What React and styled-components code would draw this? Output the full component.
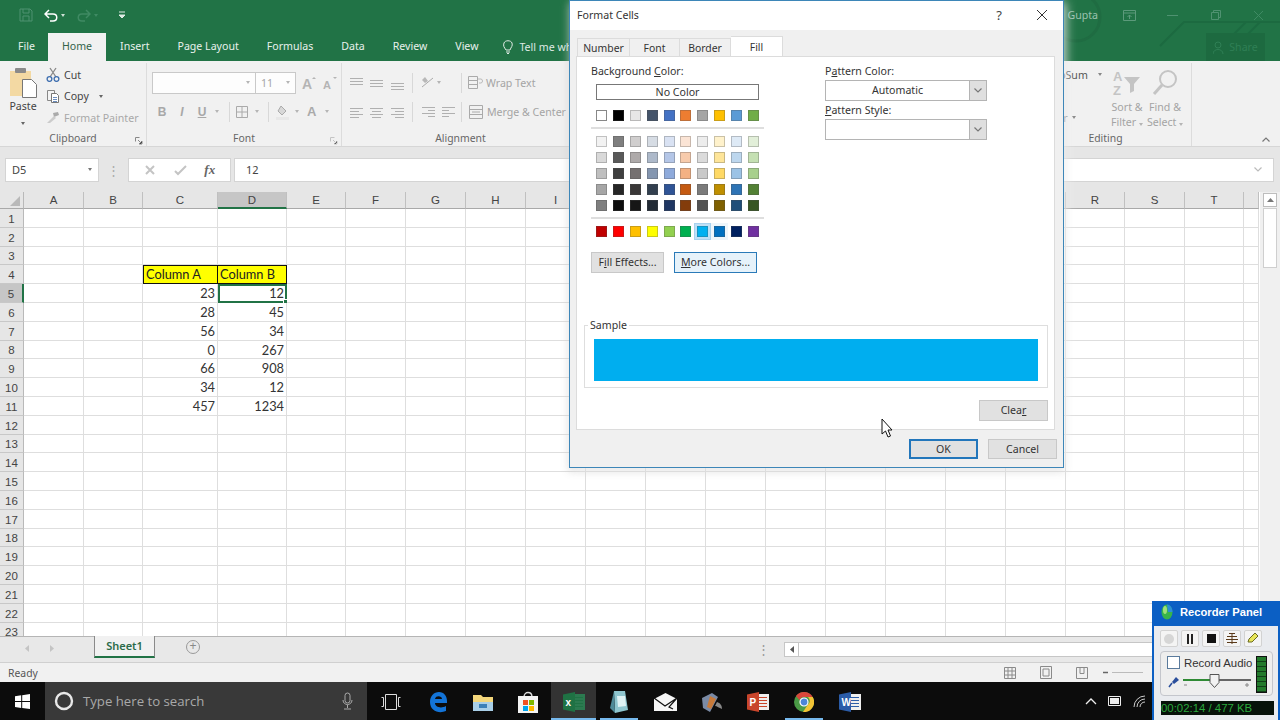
import React from 'react'
import styled, { createGlobalStyle } from 'styled-components'

const ui = '"Noto Sans", "Open Sans", sans-serif'

const GlobalStyle = createGlobalStyle`
  html, body { margin: 0; padding: 0; background: #fff; }
  * { box-sizing: border-box; }
`

const Page = styled.div`
  position: relative;
  display: flex;
  flex-direction: column;
  width: 1280px;
  height: 720px;
  overflow: hidden;
  font-family: ${ui};
  font-size: 11px;
  color: #333;
`

/* ---------- title bar ---------- */
const TitleBar = styled.div`
  position: relative;
  flex: none;
  height: 61px;
  background: #217346;
  overflow: hidden;
`
const Circuit = styled.svg`
  position: absolute;
  inset: 0;
`
const QatRow = styled.div`
  position: relative;
  display: flex;
  align-items: center;
  height: 30px;
  padding-left: 19px;
  gap: 9px;
`
const WindowControls = styled.div`
  margin-left: auto;
  display: flex;
  align-items: center;
  height: 30px;
  color: #9cc2ae;
  font-size: 10.6px;
`
const Gupta = styled.span`
  margin-right: 10px;
`
const WinBtn = styled.div`
  width: 43px;
  display: flex;
  justify-content: center;
`
const TabRow = styled.div`
  position: relative;
  display: flex;
  align-items: flex-end;
  height: 31px;
  padding-left: 5px;
`
const RibbonTab = styled.div`
  height: 28px;
  line-height: 27px;
  padding: 0 ${p => p.$pad || 13}px;
  margin-right: ${p => p.$mr || 0}px;
  font-size: 10.6px;
  white-space: nowrap;
  color: ${p => (p.$active ? '#33634a' : '#e8f1ec')};
  background: ${p => (p.$active ? '#f1f1f1' : 'transparent')};
`
const TellMe = styled.div`
  display: flex;
  align-items: center;
  gap: 6px;
  width: 66px;
  height: 28px;
  margin-left: 11px;
  overflow: hidden;
  white-space: nowrap;
  font-size: 10.6px;
  color: #dfeae4;
`
const Share = styled.div`
  position: absolute;
  right: 15px;
  bottom: 0;
  width: 59px;
  height: 28px;
  background: #1d6a40;
  color: #2f7f55;
  display: flex;
  align-items: center;
  justify-content: center;
  gap: 5px;
  font-size: 10.6px;
`

/* ---------- ribbon ---------- */
const Ribbon = styled.div`
  flex: none;
  display: flex;
  height: 86px;
  padding-top: 2px;
  background: #f1f1f1;
  border-bottom: 1px solid #d6d6d6;
  position: relative;
`
const Group = styled.div`
  position: relative;
  flex: none;
  width: ${p => p.$w}px;
  height: 83px;
  border-right: ${p => (p.$plain ? 'none' : '1px solid #dcdcdc')};
`
const GroupBody = styled.div`
  display: flex;
  height: 68px;
  padding-left: ${p => p.$pl || 0}px;
`
const GroupLabel = styled.div`
  height: 14px;
  line-height: 14px;
  text-align: center;
  color: #666;
  font-size: 10.4px;
`
const Launcher = styled.svg`
  position: absolute;
  right: 3px;
  bottom: 1px;
`
const PasteCol = styled.div`
  width: 46px;
  display: flex;
  flex-direction: column;
  align-items: center;
  font-size: 10.6px;
  color: #444;
  padding-top: 5px;
`
const Stack = styled.div`
  display: flex;
  flex-direction: column;
  gap: ${p => p.$gap || 0}px;
  padding-top: ${p => p.$pt || 0}px;
  width: ${p => (p.$w ? `${p.$w}px` : 'auto')};
`
const SmallBtn = styled.div`
  display: flex;
  align-items: center;
  gap: ${p => p.$gap || 4}px;
  height: 21.5px;
  white-space: nowrap;
  font-size: 10.6px;
  color: ${p => p.$c || '#444'};
`
const Caret = styled.span`
  display: inline-block;
  flex: none;
  width: 0;
  height: 0;
  margin-left: ${p => p.$ml || 0}px;
  margin-top: ${p => p.$mt || 0}px;
  border-left: 2.5px solid transparent;
  border-right: 2.5px solid transparent;
  border-top: 3px solid ${p => p.$c || '#b5b5b5'};
`
const ComboRow = styled.div`
  display: flex;
  align-items: center;
  height: 23px;
`
const RibbonCombo = styled.div`
  width: ${p => p.$w}px;
  height: 22px;
  background: #fdfdfd;
  border: 1px solid #c9c9c9;
  margin-left: ${p => (p.$join ? -1 : 0)}px;
  display: flex;
  align-items: center;
  padding: 0 5px;
  color: #a6a6a6;
  font-size: 10.6px;
  & > span:last-child {
    margin-left: auto;
  }
`
const IconSlot = styled.div`
  width: ${p => p.$w}px;
  flex: none;
  display: flex;
  align-items: center;
  justify-content: center;
  height: 22px;
  margin-left: ${p => p.$ml || 0}px;
  color: #a8a8a8;
  font-weight: ${p => (p.$bold ? 700 : 400)};
  font-style: ${p => (p.$italic ? 'italic' : 'normal')};
  text-decoration: ${p => (p.$under ? 'underline' : 'none')};
  font-size: 12px;
  font-family: "Liberation Sans", sans-serif;
`
const VSep = styled.div`
  flex: none;
  width: 1px;
  height: 20px;
  margin-left: ${p => p.$ml}px;
  margin-right: ${p => p.$mr}px;
  background: #d8d8d8;
`
const BigBtn = styled.div`
  width: ${p => p.$w}px;
  display: flex;
  flex-direction: column;
  align-items: center;
  color: #a4a4a4;
  font-size: 10.6px;
  line-height: 15px;
  padding-top: 6px;
  white-space: nowrap;
`
const BigIcon = styled.div`
  height: 31px;
`

/* ---------- formula bar ---------- */
const FormulaBar = styled.div`
  flex: none;
  display: flex;
  align-items: center;
  height: 45px;
  padding: 0 6px 0 5px;
  background: #e6e6e6;
`
const FieldBox = styled.div`
  height: 24px;
  background: #fff;
  border: 1px solid #d4d4d4;
  display: flex;
  align-items: center;
  font-size: 11px;
  color: #444;
`
const NameBox = styled(FieldBox)`
  width: 94px;
  padding: 0 6px;
  justify-content: space-between;
`
const Dots = styled.div`
  width: 29px;
  text-align: center;
  color: #aaa;
  font-size: 13px;
  line-height: 6px;
`
const FxBox = styled(FieldBox)`
  width: 103px;
  justify-content: space-around;
  padding: 0 6px;
  color: #bbb;
`
const Fx = styled.span`
  font-family: "Liberation Serif", serif;
  font-style: italic;
  font-weight: 700;
  color: #666;
  font-size: 13px;
`
const FormulaInput = styled(FieldBox)`
  flex: 1;
  margin-left: 3px;
  padding: 0 11px;
  justify-content: space-between;
`

/* ---------- sheet ---------- */
const SheetArea = styled.div`
  flex: none;
  display: flex;
  height: 444px;
  background: #e6e6e6;
`
const SheetGrid = styled.div`
  flex: none;
  width: 1260px;
  height: 444px;
  overflow: hidden;
  display: grid;
  grid-template-columns: 24px 60px 59px 75px 69px 59px repeat(12, 60px) 59px 60px 59px 15px;
  grid-template-rows: 17px repeat(23, 18.8px);
  background: #fff;
  font-family: Lato, "Liberation Sans", sans-serif;
  font-size: 12.8px;
  color: #333;
`
const Corner = styled.div`
  background: #e6e6e6;
  border-right: 1px solid #b9b9b9;
  border-bottom: 1px solid #a9a9a9;
  display: flex;
  align-items: flex-end;
  justify-content: flex-end;
  padding: 0 3px 2px 0;
`
const ColHead = styled.div`
  display: flex;
  align-items: center;
  justify-content: center;
  font-family: "Liberation Sans", sans-serif;
  font-size: 11.5px;
  color: #444;
  background: ${p => (p.$sel ? '#c6c6c6' : '#e6e6e6')};
  border-right: 1px solid #c0c0c0;
  border-bottom: ${p => (p.$sel ? '2px solid #217346' : '1px solid #a9a9a9')};
`
const RowHead = styled.div`
  display: flex;
  align-items: center;
  justify-content: center;
  padding-top: 2px;
  font-family: "Liberation Sans", sans-serif;
  font-size: 11.5px;
  color: #444;
  background: ${p => (p.$sel ? '#c6c6c6' : '#e6e6e6')};
  border-right: ${p => (p.$sel ? '2px solid #217346' : '1px solid #b9b9b9')};
  border-bottom: 1px solid #c8c8c8;
`
const Cell = styled.div`
  position: relative;
  display: flex;
  align-items: flex-end;
  justify-content: ${p => (p.$head ? 'flex-start' : 'flex-end')};
  padding: 0 2px 2px;
  line-height: 1;
  white-space: nowrap;
  background: ${p => (p.$head ? '#ffff00' : '#fff')};
  color: ${p => (p.$head ? '#222' : '#333')};
  border-right: 1px solid ${p => (p.$head ? '#111' : '#dedede')};
  border-bottom: 1px solid ${p => (p.$head ? '#111' : '#dedede')};
  ${p => p.$head && 'border-top: 1px solid #111;'}
  ${p => p.$first && 'border-left: 1px solid #111;'}
  ${p => p.$sel && 'outline: 2px solid #217346; outline-offset: -2px;'}
`
const FillHandle = styled.div`
  position: absolute;
  right: -3px;
  bottom: -3px;
  width: 6px;
  height: 6px;
  background: #217346;
  border: 1px solid #fff;
`
const VScroll = styled.div`
  flex: none;
  width: 20px;
  padding: 1px 3px 0;
  background: #f0f0f0;
`
const ScrollUp = styled.div`
  height: 14px;
  background: #fff;
  border: 1px solid #bdbdbd;
  display: flex;
  align-items: center;
  justify-content: center;
`
const ScrollThumb = styled.div`
  height: 60px;
  margin-top: 1px;
  background: #fff;
  border: 1px solid #cfcfcf;
`

/* ---------- sheet tab bar / status ---------- */
const TabBar = styled.div`
  flex: none;
  display: flex;
  align-items: flex-start;
  height: 26px;
  background: #e8e8e8;
  border-top: 1px solid #b5b5b5;
`
const NavArrows = styled.div`
  width: 94px;
  height: 22px;
  display: flex;
  align-items: center;
  gap: 21px;
  padding-left: 25px;
`
const SheetTab = styled.div`
  width: 61px;
  height: 22px;
  background: #f1f1f1;
  border-left: 1px solid #8a8a8a;
  border-right: 1px solid #8a8a8a;
  border-bottom: 2px solid #217346;
  margin-top: -1px;
  text-align: center;
  line-height: 20px;
  font-size: 11px;
  font-weight: 600;
  color: #2b6b4a;
`
const AddSheet = styled.div`
  width: 14px;
  height: 14px;
  margin: 3px 0 0 31px;
  border: 1px solid #999;
  border-radius: 50%;
  color: #888;
  font-size: 12px;
  line-height: 11px;
  text-align: center;
  font-family: "Liberation Sans", sans-serif;
`
const HScrollDots = styled.div`
  margin-left: auto;
  margin-right: 14px;
  margin-top: 10px;
  color: #999;
  font-size: 13px;
  line-height: 5px;
`
const HScroll = styled.div`
  display: flex;
  width: 480px;
  height: 15px;
  margin: 5px 16px 0 0;
  background: #fff;
  border: 1px solid #c6c6c6;
`
const HScrollBtn = styled.div`
  width: 14px;
  height: 13px;
  border-right: 1px solid #c6c6c6;
  display: flex;
  align-items: center;
  justify-content: center;
`
const StatusBar = styled.div`
  flex: none;
  display: flex;
  align-items: center;
  height: 20px;
  padding-left: 8px;
  background: #f1f1f1;
  border-top: 1px solid #d0d0d0;
  color: #555;
  font-size: 10.4px;
`
const ViewIcons = styled.div`
  margin-left: auto;
  margin-right: 173px;
  display: flex;
  align-items: center;
  gap: 24px;
`
const ZoomOut = styled.svg`
  margin-left: -9px;
  margin-right: -36px;
`

/* ---------- taskbar ---------- */
const Taskbar = styled.div`
  flex: none;
  display: flex;
  align-items: stretch;
  height: 38px;
  background: #0c0c0c;
`
const StartBtn = styled.div`
  width: 45px;
  display: flex;
  align-items: center;
  justify-content: center;
`
const SearchBox = styled.div`
  width: 322px;
  background: #393939;
  display: flex;
  align-items: center;
  padding: 0 14px 0 9px;
  gap: 9px;
  color: #a9a9a9;
  font-size: 13.2px;
  font-family: "Open Sans", sans-serif;
  & > svg:last-child {
    margin-left: auto;
  }
`
const TaskItem = styled.div`
  position: relative;
  flex: none;
  width: ${p => p.$w || 45}px;
  display: flex;
  align-items: center;
  justify-content: center;
  background: ${p => (p.$active ? '#333' : 'transparent')};
  padding-top: 2px;
  ${p =>
    p.$open &&
    `&::after {
      content: '';
      position: absolute;
      bottom: 0;
      left: ${p.$active ? 0 : 4}px;
      right: ${p.$active ? 0 : 4}px;
      height: 2px;
      background: #76b9ed;
    }`}
`
const Tray = styled.div`
  margin-left: 212px;
  display: flex;
  align-items: center;
  gap: 11px;
`

/* ---------- format cells dialog ---------- */
const Dialog = styled.div`
  position: absolute;
  left: 569px;
  top: 0;
  width: 495px;
  height: 468px;
  display: flex;
  flex-direction: column;
  background: #f0f0f0;
  border: 1px solid #3d86b8;
  box-shadow: 2px 2px 10px rgba(255, 255, 255, 0.75), 0 3px 8px rgba(90, 90, 90, 0.25);
  font-size: 10.6px;
  color: #333;
`
const DialogTitle = styled.div`
  flex: none;
  height: 29px;
  background: #fff;
  display: flex;
  align-items: center;
  padding: 0 15px 2px 7px;
  font-size: 10.6px;
  color: #333;
`
const HelpMark = styled.span`
  margin-left: auto;
  margin-right: 34px;
  font-size: 13px;
  color: #444;
`
const DialogTabs = styled.div`
  flex: none;
  height: 26px;
  display: flex;
  align-items: flex-end;
  padding-left: 7px;
`
const DialogTab = styled.div`
  width: ${p => p.$w}px;
  height: ${p => (p.$active ? 20 : 18)}px;
  line-height: ${p => (p.$active ? 20 : 19)}px;
  text-align: center;
  background: ${p => (p.$active ? '#fff' : '#f0f0f0')};
  border: 1px solid #dcdcdc;
  border-width: 1px 1px 0 ${p => (p.$first ? 1 : 0)}px;
  font-size: 10.4px;
`
const Panel = styled.div`
  flex: none;
  width: 479px;
  height: 374px;
  margin-left: 6px;
  background: #fff;
  border: 1px solid #dcdcdc;
  padding: 7px 6px 0 7px;
`
const TopColumns = styled.div`
  display: flex;
  height: 209px;
  padding-left: 7px;
`
const LeftCol = styled.div`
  width: 234px;
`
const Label = styled.div`
  height: 14px;
  line-height: 14px;
  white-space: nowrap;
`
const NoColor = styled.div`
  width: 163px;
  height: 16px;
  margin: 6px 0 10px 5px;
  border: 1px solid #777;
  text-align: center;
  line-height: 14px;
`
const SwatchRow = styled.div`
  display: flex;
  justify-content: space-between;
  width: 163px;
  margin-left: 5px;
  margin-bottom: ${p => p.$mb || 0}px;
`
const Swatch = styled.div`
  width: 11px;
  height: 11px;
  background: ${p => p.$c};
  border: 1px solid ${p => (p.$c === '#ffffff' ? '#888' : 'rgba(80, 80, 80, 0.3)')};
  box-shadow: ${p =>
    p.$sel
      ? '0 0 0 2px #bfe0f5, 0 0 0 3px #a8d2ee'
      : p.$near
      ? '0 0 0 3px #eef6fb'
      : 'none'};
`
const PaletteLine = styled.div`
  width: 173px;
  height: 2px;
  background: #dedede;
  margin: 6px 0 7px;
`
const ButtonRow = styled.div`
  display: flex;
  gap: 10px;
  margin-top: 15px;
`
const DlgButton = styled.div`
  width: ${p => p.$w}px;
  height: ${p => p.$h || 21}px;
  line-height: ${p => (p.$h || 21) - 2}px;
  text-align: center;
  background: ${p => (p.$focus ? '#e6f2fa' : '#e1e1e1')};
  border: 1px solid ${p => (p.$focus ? '#2a7ab8' : '#c8c8c8')};
  ${p => p.$default && 'border: 2px solid #2276bb; line-height: 16px;'}
`
const RightCol = styled.div`
  width: 162px;
`
const Combo = styled.div`
  display: flex;
  height: 21px;
  margin: 2px 0 2px;
  border: 1px solid #b4b4b4;
  background: #fff;
`
const ComboText = styled.div`
  flex: 1;
  text-align: center;
  line-height: 19px;
`
const ComboArrow = styled.div`
  width: 17px;
  background: #dfdfdf;
  border-left: 1px solid #b4b4b4;
  display: flex;
  align-items: center;
  justify-content: center;
`
const SampleGroup = styled.fieldset`
  margin: 45px 0 0;
  padding: 0 9px 6px;
  min-width: 0;
  width: 464px;
  border: 1px solid #dedede;
`
const SampleLegend = styled.legend`
  padding: 0 2px;
  margin-left: -6px;
  height: 14px;
  line-height: 14px;
`
const SampleFill = styled.div`
  height: 42px;
  margin-top: 7px;
  background: #00aeef;
`
const ClearRow = styled.div`
  display: flex;
  justify-content: flex-end;
  width: 464px;
  margin-top: 12px;
`
const DialogActions = styled.div`
  display: flex;
  justify-content: flex-end;
  gap: 10px;
  padding: 9px 6px 0 0;
`
const Cursor = styled.svg`
  position: absolute;
  left: 881px;
  top: 418px;
`

/* ---------- recorder panel ---------- */
const Recorder = styled.div`
  position: absolute;
  left: 1152px;
  top: 601px;
  width: 128px;
  height: 119px;
  background: #e9ebef;
  border-left: 2px solid #0b5fc4;
  border-right: 2px solid #0b5fc4;
  display: flex;
  flex-direction: column;
`
const RecTitle = styled.div`
  flex: none;
  height: 25px;
  display: flex;
  align-items: center;
  gap: 7px;
  padding: 0 0 3px 7px;
  background: #0b5fc4;
  color: #fff;
  font: 700 11.2px "Liberation Sans", sans-serif;
  white-space: nowrap;
`
const RecButtons = styled.div`
  display: flex;
  gap: 3px;
  margin: 4px 0 0 6px;
`
const RecButton = styled.div`
  width: 18px;
  height: 17px;
  background: #f4f4f4;
  border: 1px solid #d2d2d2;
  border-radius: 2px;
  display: flex;
  align-items: center;
  justify-content: center;
`
const RecAudio = styled.div`
  position: relative;
  width: 113px;
  height: 45px;
  margin: 4px 0 0 6px;
  background: #eeeeee;
  border: 1px solid #c4c6cc;
  border-radius: 4px;
  padding: 4px 0 0 6px;
`
const RecCheckRow = styled.div`
  display: flex;
  align-items: center;
  gap: 4px;
  font: 11.4px "Liberation Sans", sans-serif;
  color: #333;
  white-space: nowrap;
`
const RecCheck = styled.div`
  width: 13px;
  height: 13px;
  background: #fff;
  border: 1px solid #5a7a9c;
`
const RecSliderRow = styled.div`
  display: flex;
  align-items: center;
  gap: 3px;
  margin-top: 5px;
`
const Meter = styled.div`
  position: absolute;
  right: 5px;
  top: 4px;
  bottom: 2px;
  width: 11px;
  border: 1px solid #111;
  background: repeating-linear-gradient(#237a2c 0 4px, #123e18 4px 5px);
`
const RecTime = styled.div`
  width: 113px;
  height: 14px;
  margin: 5px 0 0 7px;
  background: #07120a;
  color: #2aa83c;
  font: 11.4px/14px "Liberation Sans", sans-serif;
  white-space: nowrap;
`

/* ---------- drawings ---------- */
const Svg = ({ w = 16, h = 16, children, ...rest }) => (
  <svg width={w} height={h} viewBox={`0 0 ${w} ${h}`} fill="none" {...rest}>
    {children}
  </svg>
)

const lines = (rows, color, sw = 1) =>
  rows.map(([x1, x2, y], i) => (
    <line key={i} x1={x1} x2={x2} y1={y + 0.5} y2={y + 0.5} stroke={color} strokeWidth={sw} />
  ))

const PasteIcon = () => (
  <Svg w={28} h={31}>
    <rect x="1" y="3" width="21" height="25" fill="#f3d9a3" />
    <rect x="6" y="0" width="11" height="5" rx="1" fill="#8a8a8a" />
    <path d="M13.500 11.500h9l5 5v13h-14z" fill="#fff" stroke="#777" />
  </Svg>
)
const ScissorsIcon = () => (
  <Svg w={14} h={15}>
    <path d="M4 1l6 9M10 1L4 10" stroke="#888" strokeWidth="1.3" />
    <circle cx="3.5" cy="12" r="2.4" stroke="#3f6fb0" strokeWidth="1.3" />
    <circle cx="10.5" cy="12" r="2.4" stroke="#3f6fb0" strokeWidth="1.3" />
  </Svg>
)
const CopyIcon = () => (
  <Svg w={14} h={14}>
    <path d="M1.5 1.5h7v10h-7z" stroke="#888" fill="#f4f4f4" />
    <path d="M5.5 4.5h5l2 2v7h-7z" stroke="#777" fill="#fff" />
    {lines([[7, 11, 8], [7, 11, 10], [7, 11, 12]], '#6c8ebf')}
  </Svg>
)
const PainterIcon = () => (
  <Svg w={14} h={13}>
    <path d="M7 2l5-1 1 3-5 2z" fill="#aaa" />
    <path d="M1 12l7-7 2 2-6 5z" fill="#ccc" />
  </Svg>
)
const GrowIcon = ({ small }) => (
  <Svg w={16} h={16}>
    <text x="1" y="14" fontSize={small ? 11 : 14} fontWeight="700" fill="#b4b4b4" fontFamily="Liberation Sans">A</text>
    <path d={small ? 'M11 2h4l-2 2z' : 'M11 4h4l-2-2z'} fill="#b4b4b4" />
  </Svg>
)
const BordersIcon = () => (
  <Svg w={14} h={14}>
    <path d="M1.5 1.5h11v11h-11zM7 1.5v11M1.5 7h11" stroke="#aaa" />
  </Svg>
)
const FillIcon = () => (
  <Svg w={14} h={16}>
    <path d="M5 2l5 5-4 4-4-4z" stroke="#aaa" fill="#d8d8d8" />
    <rect x="0" y="13" width="13" height="3" fill="#e8e8e8" />
  </Svg>
)
const FontColorIcon = () => (
  <Svg w={12} h={15}>
    <text x="0" y="12" fontSize="13" fontWeight="700" fill="#aaa" fontFamily="Liberation Sans">A</text>
  </Svg>
)
const AlignIcon = ({ rows }) => (
  <Svg w={15} h={14}>{lines(rows, '#b0b0b0')}</Svg>
)
const OrientIcon = () => (
  <Svg w={15} h={15}>
    <path d="M2 12L13 3" stroke="#aaa" />
    <path d="M2 5l3-3 3 4-3 2z" fill="#b8b8b8" />
  </Svg>
)
const WrapIcon = () => (
  <Svg w={17} h={15}>
    <path d="M1.5 1.5h9v12h-9zM1.5 5.5h9M1.5 9.5h9" stroke="#aaa" />
    <path d="M11 4h3c2 0 2 4 0 4h-2" stroke="#bbb" />
  </Svg>
)
const MergeIcon = () => (
  <Svg w={16} h={16}>
    <path d="M1.5 1.5h13v13h-13zM1.5 5.5h13M1.5 10.5h13" stroke="#aaa" />
    <path d="M4 8h8" stroke="#aaa" />
  </Svg>
)
const SortIcon = () => (
  <Svg w={30} h={28}>
    <text x="1" y="12" fontSize="13" fontWeight="700" fill="#c4c4c4" fontFamily="Liberation Sans">A</text>
    <text x="1" y="26" fontSize="13" fontWeight="700" fill="#c4c4c4" fontFamily="Liberation Sans">Z</text>
    <path d="M12 8h16l-6 7v7l-4 2v-9z" fill="#c4c4c4" />
  </Svg>
)
const FindIcon = () => (
  <Svg w={28} h={28}>
    <circle cx="17" cy="10" r="8" stroke="#c4c4c4" strokeWidth="2" />
    <path d="M11 16l-8 9" stroke="#c4c4c4" strokeWidth="3" />
  </Svg>
)
const Chevron = ({ up, color = '#777', size = 8 }) => (
  <Svg w={size} h={5}>
    <path d={up ? `M0.5 4.5L${size / 2} 1L${size - 0.5} 4.5` : `M0.5 0.5L${size / 2} 4L${size - 0.5} 0.5`} stroke={color} strokeWidth="1.2" />
  </Svg>
)
const WindowsLogo = () => (
  <Svg w={15} h={15}>
    <path d="M0 2.2l6.2-.9v5.8H0zM7.2 1.2L15 0v7.1H7.2zM0 8.1h6.2v5.8L0 13zM7.2 8.1H15V15l-7.8-1.1z" fill="#fff" />
  </Svg>
)
const EdgeIcon = () => (
  <Svg w={20} h={22}>
    <path d="M2 11C2 5 6 1 11 1c5 0 8 4 8 9v2H7c0 4 6 6 11 3v5c-7 3-16 0-16-9zm5-3h7c0-3-6-4-7 0z" fill="#1374d8" />
  </Svg>
)
const FolderIcon = () => (
  <Svg w={20} h={18}>
    <path d="M0 2h8l2 2h10v14H0z" fill="#f4d77b" />
    <rect x="0" y="9" width="20" height="9" fill="#a9cfe8" />
    <rect x="6" y="11" width="8" height="4" fill="#3c80b8" />
  </Svg>
)
const StoreIcon = () => (
  <Svg w={22} h={22}>
    <path d="M7 6c0-6 8-6 8 0" stroke="#ddd" strokeWidth="1.4" />
    <rect x="1" y="5" width="20" height="17" fill="#f4f4f4" />
    <rect x="6" y="9" width="5" height="5" fill="#f25022" />
    <rect x="12" y="9" width="5" height="5" fill="#7fba00" />
    <rect x="6" y="15" width="5" height="5" fill="#00a4ef" />
    <rect x="12" y="15" width="5" height="5" fill="#ffb900" />
  </Svg>
)
const DocIcon = ({ bg, letter, page = '#eee' }) => (
  <Svg w={22} h={20}>
    <rect x="8" y="2" width="14" height="16" fill={page} />
    {lines([[12, 20, 5], [12, 20, 8], [12, 20, 11], [12, 20, 14]], bg)}
    <path d="M0 2.5L12 0v20L0 17.5z" fill={bg} />
    <text x="2.5" y="14" fontSize="10" fontWeight="700" fill="#fff" fontFamily="Liberation Sans">{letter}</text>
  </Svg>
)
const ChromeIcon = () => (
  <Svg w={20} h={20}>
    <circle cx="10" cy="10" r="10" fill="#4a9b46" />
    <path d="M10 0a10 10 0 0 1 8.7 5H10a5 5 0 0 0-4.6 3L2 4a10 10 0 0 1 8-4z" fill="#d8473b" />
    <path d="M18.7 5A10 10 0 0 1 9 20l4.5-7a5 5 0 0 0 .5-8z" fill="#f2c335" />
    <circle cx="10" cy="10" r="4" fill="#4a86d8" stroke="#fff" strokeWidth="1.2" />
  </Svg>
)
const MailIcon = () => (
  <Svg w={23} h={18}>
    <path d="M0 6L11.500 0 23 6v12H0z" fill="#f6f6f6" />
    <path d="M0 5l11 8 12-8-8 9 4 2" stroke="#111" strokeWidth="1.2" />
  </Svg>
)
const AppIcon = () => (
  <Svg w={20} h={24}>
    <path d="M5 1h11l3 19-13 3z" fill="#8fc6cf" />
    <path d="M5 1l1 22-5-5z" fill="#4f8a98" />
    <path d="M8 6h8l1 10-8 1z" fill="#dff2f4" />
  </Svg>
)
const FilmIcon = () => (
  <Svg w={22} h={20}>
    <path d="M1 6l10-5 6 4-8 15-7-4z" fill="#7a8aa5" />
    <path d="M9 4l6 3-5 10-4-2z" fill="#c87a3a" />
    <path d="M16 10c3 1 5 3 5 7-3-1-5-3-7-3z" fill="#888" />
  </Svg>
)

/* ---------- data ---------- */
const COLS = 'ABCDEFGHIJKLMNOPQRSTU'.split('')
const CELLS = {
  C4: 'Column A', D4: 'Column B',
  C5: '23', D5: '12',
  C6: '28', D6: '45',
  C7: '56', D7: '34',
  C8: '0', D8: '267',
  C9: '66', D9: '908',
  C10: '34', D10: '12',
  C11: '457', D11: '1234',
}
const THEME = ['#ffffff', '#000000', '#e7e6e6', '#44546a', '#4472c4', '#ed7d31', '#a5a5a5', '#ffc000', '#5b9bd5', '#70ad47']
const TINTS = [
  ['#f2f2f2', '#7f7f7f', '#d0cece', '#d6dce4', '#d9e2f3', '#fbe4d5', '#ededed', '#fff2cc', '#deeaf6', '#e2efd9'],
  ['#d9d9d9', '#595959', '#aeaaaa', '#adb9ca', '#b4c6e7', '#f7cbac', '#dbdbdb', '#fee599', '#bdd7ee', '#c5e0b3'],
  ['#bfbfbf', '#3f3f3f', '#757070', '#8496b0', '#8eaadb', '#f4b183', '#c9c9c9', '#ffd965', '#9cc3e5', '#a8d08d'],
  ['#a6a6a6', '#262626', '#3a3838', '#323f4f', '#2f5496', '#c55a11', '#7b7b7b', '#bf8f00', '#2e74b5', '#538135'],
  ['#7f7f7f', '#0d0d0d', '#161616', '#222a35', '#1f3763', '#833c0b', '#525252', '#7f6000', '#1f4e79', '#375623'],
]
const STANDARD = ['#c00000', '#ff0000', '#ffc000', '#ffff00', '#92d050', '#00b050', '#00b0f0', '#0070c0', '#002060', '#7030a0']

const Sheet = () => {
  const cells = []
  cells.push(
    <Corner key="corner">
      <Svg w={10} h={10}><path d="M10 0v10H0z" fill="#b9b9b9" /></Svg>
    </Corner>,
  )
  COLS.forEach(c => cells.push(<ColHead key={c} $sel={c === 'D'}>{c === 'U' ? '' : c}</ColHead>))
  for (let r = 1; r <= 23; r++) {
    cells.push(<RowHead key={`r${r}`} $sel={r === 5}>{r}</RowHead>)
    COLS.forEach(c => {
      const id = `${c}${r}`
      const head = r === 4 && (c === 'C' || c === 'D')
      cells.push(
        <Cell key={id} $head={head} $first={head && c === 'C'} $sel={id === 'D5'}>
          {CELLS[id]}
          {id === 'D5' && <FillHandle />}
        </Cell>,
      )
    })
  }
  return <SheetGrid>{cells}</SheetGrid>
}

const FormatCells = () => (
  <Dialog>
    <DialogTitle>
      Format Cells
      <HelpMark>?</HelpMark>
      <Svg w={12} h={12}><path d="M1 1l10 10M11 1L1 11" stroke="#333" /></Svg>
    </DialogTitle>
    <DialogTabs>
      <DialogTab $w={53} $first>Number</DialogTab>
      <DialogTab $w={50}>Font</DialogTab>
      <DialogTab $w={51}>Border</DialogTab>
      <DialogTab $w={52} $active>Fill</DialogTab>
    </DialogTabs>
    <Panel>
      <TopColumns>
        <LeftCol>
          <Label>Background <u>C</u>olor:</Label>
          <NoColor>No Color</NoColor>
          <SwatchRow>{THEME.map(c => <Swatch key={c} $c={c} />)}</SwatchRow>
          <PaletteLine />
          {TINTS.map((row, i) => (
            <SwatchRow key={i} $mb={i < 4 ? 5 : 0}>
              {row.map((c, j) => <Swatch key={j} $c={c} />)}
            </SwatchRow>
          ))}
          <PaletteLine />
          <SwatchRow>
            {STANDARD.map((c, i) => <Swatch key={c} $c={c} $sel={i === 6} $near={i === 7} />)}
          </SwatchRow>
          <ButtonRow>
            <DlgButton $w={73}>F<u>i</u>ll Effects...</DlgButton>
            <DlgButton $w={83} $focus><u>M</u>ore Colors...</DlgButton>
          </ButtonRow>
        </LeftCol>
        <RightCol>
          <Label>P<u>a</u>ttern Color:</Label>
          <Combo>
            <ComboText>Automatic</ComboText>
            <ComboArrow><Chevron /></ComboArrow>
          </Combo>
          <Label><u>P</u>attern Style:</Label>
          <Combo>
            <ComboText />
            <ComboArrow><Chevron /></ComboArrow>
          </Combo>
        </RightCol>
      </TopColumns>
      <SampleGroup>
        <SampleLegend>Sample</SampleLegend>
        <SampleFill />
      </SampleGroup>
      <ClearRow>
        <DlgButton $w={69}>Clea<u>r</u></DlgButton>
      </ClearRow>
    </Panel>
    <DialogActions>
      <DlgButton $w={69} $h={20} $default>OK</DlgButton>
      <DlgButton $w={69} $h={20}>Cancel</DlgButton>
    </DialogActions>
  </Dialog>
)

const RecorderPanel = () => (
  <Recorder>
    <RecTitle>
      <Svg w={12} h={16}>
        <ellipse cx="6" cy="8" rx="5.5" ry="7.5" fill="#38b54a" />
        <ellipse cx="4" cy="6" rx="2" ry="4" fill="#9fe27a" />
        <path d="M6 .5c3 0 5.5 3 5.5 7.5H7z" fill="#2b8fd8" />
      </Svg>
      Recorder Panel
    </RecTitle>
    <RecButtons>
      <RecButton>
        <Svg w={12} h={12}><circle cx="6" cy="6" r="5" fill="#d6d6d6" /></Svg>
      </RecButton>
      <RecButton>
        <Svg w={8} h={10}><path d="M1 0h2v10H1zM5 0h2v10H5z" fill="#222" /></Svg>
      </RecButton>
      <RecButton>
        <Svg w={9} h={9}><rect width="9" height="9" fill="#111" /></Svg>
      </RecButton>
      <RecButton>
        <Svg w={14} h={13}>
          <path d="M4 1.500h6M2 4.500h10M1 7.500h12M2 10.500h10M7 1v11" stroke="#5a3a1a" />
        </Svg>
      </RecButton>
      <RecButton>
        <Svg w={14} h={13}>
          <path d="M9 1l3 3-6 6H2l1-3z" fill="#e8e65a" stroke="#6b6b20" />
        </Svg>
      </RecButton>
    </RecButtons>
    <RecAudio>
      <RecCheckRow><RecCheck />Record Audio</RecCheckRow>
      <RecSliderRow>
        <Svg w={13} h={14}>
          <path d="M9 2l3 3-5 4-2-2z" fill="#2b4f9c" />
          <path d="M5 8l-3 4" stroke="#2b4f9c" strokeWidth="1.5" />
        </Svg>
        <Svg w={68} h={16}>
          <rect x="0" y="5" width="28" height="2" fill="#2f8a34" />
          <rect x="36" y="5" width="32" height="2" fill="#666" />
          <path d="M1 11h3M62 11h4M64 9v4" stroke="#888" />
          <path d="M27 .5h9v8l-4.500 5L27 8.500z" fill="#f2f2f2" stroke="#555" />
        </Svg>
      </RecSliderRow>
      <Meter />
    </RecAudio>
    <RecTime>00:02:14 / 477 KB</RecTime>
  </Recorder>
)

const App = () => (
  <Page>
    <GlobalStyle />
    <TitleBar>
      <Circuit width="1280" height="61" fill="none">
        <circle cx="1076" cy="17" r="24" stroke="#1f6c42" strokeWidth="3" />
        <path d="M1160 46l24-24h96M1222 46l24-24M1236 46l24-24" stroke="#1c6a40" strokeWidth="2" />
      </Circuit>
      <QatRow>
        <Svg w={14} h={14}>
          <path d="M1 1h10l2 2v10H1zM4 1v4h6V1M4 13V8h6v5" stroke="#4f9271" />
        </Svg>
        <Svg w={14} h={13} style={{ marginLeft: 2 }}>
          <path d="M2 5h7c5 0 5 7 0 7H6M5 1L1 5l4 4" stroke="#fff" strokeWidth="1.5" />
        </Svg>
        <Caret $c="#cfe0d6" $ml={-6} />
        <Svg w={14} h={13} style={{ marginLeft: 3 }}>
          <path d="M12 5H5c-5 0-5 7 0 7h3M9 1l4 4-4 4" stroke="#3f8a63" strokeWidth="1.5" />
        </Svg>
        <Caret $c="#3f8a63" $ml={-6} />
        <Svg w={8} h={8} style={{ marginLeft: 11 }}>
          <path d="M1 1h6M1 4l3 3 3-3z" stroke="#dfeae4" fill="#dfeae4" />
        </Svg>
        <WindowControls>
          <Gupta>Gupta</Gupta>
          <WinBtn>
            <Svg w={13} h={11}>
              <path d="M.5.5h12v10H.5zM.5 3h12M6.5 9V5M4.5 7l2-2 2 2" stroke="#5c9a7b" />
            </Svg>
          </WinBtn>
          <WinBtn>
            <Svg w={11} h={3}><path d="M0 1.5h11" stroke="#4f9271" /></Svg>
          </WinBtn>
          <WinBtn>
            <Svg w={10} h={10}><path d="M.5 2.5h7v7h-7zM2.5 2.5v-2h7v7h-2" stroke="#4f9271" /></Svg>
          </WinBtn>
          <WinBtn>
            <Svg w={11} h={11}><path d="M1 1l9 9M10 1l-9 9" stroke="#3f8a63" /></Svg>
          </WinBtn>
        </WindowControls>
      </QatRow>
      <TabRow>
        <RibbonTab $mr={0}>File</RibbonTab>
        <RibbonTab $active $pad={14}>Home</RibbonTab>
        <RibbonTab $pad={14}>Insert</RibbonTab>
        <RibbonTab $pad={14}>Page Layout</RibbonTab>
        <RibbonTab $pad={14}>Formulas</RibbonTab>
        <RibbonTab $pad={14}>Data</RibbonTab>
        <RibbonTab $pad={14}>Review</RibbonTab>
        <RibbonTab $pad={14}>View</RibbonTab>
        <TellMe>
          <Svg w={10} h={14} style={{ flex: 'none' }}>
            <path d="M3 10C1 7 0 6 1 3c1-3 7-3 8 0 1 3-1 4-2 7zM3 12h4M4 13.5h2" stroke="#dfeae4" />
          </Svg>
          Tell me what you want to do
        </TellMe>
        <Share>
          <Svg w={11} h={13}><circle cx="5" cy="4" r="3" stroke="#2f7f55" /><path d="M0 13c0-6 10-6 10 0" stroke="#2f7f55" /></Svg>
          Share
        </Share>
      </TabRow>
    </TitleBar>

    <Ribbon>
      <Group $w={147}>
        <GroupBody>
          <PasteCol>
            <PasteIcon />
            Paste
            <Caret $c="#666" $mt={9} />
          </PasteCol>
          <Stack $pt={1}>
            <SmallBtn><ScissorsIcon />Cut</SmallBtn>
            <SmallBtn><CopyIcon />Copy<Caret $c="#666" $ml={6} /></SmallBtn>
            <SmallBtn $c="#a8a8a8"><PainterIcon />Format Painter</SmallBtn>
          </Stack>
        </GroupBody>
        <GroupLabel>Clipboard</GroupLabel>
        <Launcher width="8" height="8"><path d="M.5.5h4M.5.5v4M3 3l4 4M7 4v3H4" stroke="#888" /></Launcher>
      </Group>

      <Group $w={195}>
        <GroupBody $pl={5}>
          <Stack $gap={6} $pt={8}>
            <ComboRow>
              <RibbonCombo $w={104}><span /><Caret /></RibbonCombo>
              <RibbonCombo $w={41} $join><span>11</span><Caret /></RibbonCombo>
              <IconSlot $w={22} $ml={2}><GrowIcon /></IconSlot>
              <IconSlot $w={20}><GrowIcon small /></IconSlot>
            </ComboRow>
            <ComboRow>
              <IconSlot $w={20} $bold>B</IconSlot>
              <IconSlot $w={20} $italic $bold>I</IconSlot>
              <IconSlot $w={20} $bold $under>U</IconSlot>
              <Caret $ml={3} />
              <VSep $ml={10} $mr={2} />
              <IconSlot $w={20}><BordersIcon /></IconSlot>
              <Caret $ml={3} />
              <VSep $ml={9} $mr={4} />
              <IconSlot $w={20}><FillIcon /></IconSlot>
              <Caret $ml={2} />
              <IconSlot $w={24} $ml={2}><FontColorIcon /></IconSlot>
              <Caret />
            </ComboRow>
          </Stack>
        </GroupBody>
        <GroupLabel>Font</GroupLabel>
        <Launcher width="8" height="8"><path d="M.5.5h4M.5.5v4M3 3l4 4M7 4v3H4" stroke="#c4c4c4" /></Launcher>
      </Group>

      <Group $w={238}>
        <GroupBody $pl={4}>
          <Stack $gap={6} $pt={8}>
            <ComboRow>
              <IconSlot $w={20}><AlignIcon rows={[[1, 14, 2], [1, 14, 5], [1, 14, 8]]} /></IconSlot>
              <IconSlot $w={21}><AlignIcon rows={[[1, 14, 4], [1, 14, 7], [1, 14, 10]]} /></IconSlot>
              <IconSlot $w={20}><AlignIcon rows={[[1, 14, 7], [1, 14, 10], [1, 14, 13]]} /></IconSlot>
              <VSep $ml={5} $mr={5} />
              <IconSlot $w={19}><OrientIcon /></IconSlot>
              <Caret />
              <VSep $ml={20} $mr={5} />
              <SmallBtn $c="#a4a4a4" $gap={2}><WrapIcon />Wrap Text</SmallBtn>
            </ComboRow>
            <ComboRow>
              <IconSlot $w={20}><AlignIcon rows={[[1, 14, 3], [1, 10, 6], [1, 14, 9], [1, 10, 12]]} /></IconSlot>
              <IconSlot $w={21}><AlignIcon rows={[[1, 14, 3], [3, 12, 6], [1, 14, 9], [3, 12, 12]]} /></IconSlot>
              <IconSlot $w={20}><AlignIcon rows={[[1, 14, 3], [5, 14, 6], [1, 14, 9], [5, 14, 12]]} /></IconSlot>
              <VSep $ml={5} $mr={5} />
              <IconSlot $w={20}><AlignIcon rows={[[1, 14, 2], [7, 14, 5], [1, 14, 8], [7, 14, 11]]} /></IconSlot>
              <IconSlot $w={20}><AlignIcon rows={[[1, 14, 2], [1, 8, 5], [1, 14, 8], [1, 8, 11]]} /></IconSlot>
              <VSep $ml={3} $mr={6} />
              <SmallBtn $c="#a4a4a4" $gap={3}><MergeIcon />Merge &amp; Center</SmallBtn>
            </ComboRow>
          </Stack>
        </GroupBody>
        <GroupLabel>Alignment</GroupLabel>
      </Group>

      <Group $w={440} $plain />

      <Group $w={172}>
        <GroupBody $pl={22}>
          <Stack $w={66} $pt={1}>
            <SmallBtn $c="#555">AutoSum<Caret $c="#888" $ml={6} /></SmallBtn>
            <SmallBtn $c="#888">Fill<Caret $c="#888" /></SmallBtn>
            <SmallBtn $c="#888">Clear<Caret $c="#888" /></SmallBtn>
          </Stack>
          <BigBtn $w={38}><BigIcon><SortIcon /></BigIcon>Sort &amp;<span>Filter <Caret /></span></BigBtn>
          <BigBtn $w={38}><BigIcon><FindIcon /></BigIcon>Find &amp;<span>Select <Caret /></span></BigBtn>
        </GroupBody>
        <GroupLabel>Editing</GroupLabel>
      </Group>
      <Group $w={88} $plain>
        <GroupBody />
        <GroupLabel style={{ paddingLeft: 60 }}><Chevron up color="#777" /></GroupLabel>
      </Group>
    </Ribbon>

    <FormulaBar>
      <NameBox>D5<Caret $c="#777" /></NameBox>
      <Dots>⋮</Dots>
      <FxBox>
        <Svg w={12} h={12}><path d="M2 2l8 8M10 2l-8 8" stroke="#c4c4c4" strokeWidth="2" /></Svg>
        <Svg w={13} h={12}><path d="M1 7l3 3 8-8" stroke="#c4c4c4" strokeWidth="2" /></Svg>
        <Fx>fx</Fx>
      </FxBox>
      <FormulaInput>12<Chevron color="#bbb" /></FormulaInput>
    </FormulaBar>

    <SheetArea>
      <Sheet />
      <VScroll>
        <ScrollUp><Svg w={7} h={4}><path d="M0 4l3.5-4L7 4z" fill="#777" /></Svg></ScrollUp>
        <ScrollThumb />
      </VScroll>
    </SheetArea>

    <TabBar>
      <NavArrows>
        <Svg w={4} h={7}><path d="M4 0v7L0 3.5z" fill="#c4c4c4" /></Svg>
        <Svg w={4} h={7}><path d="M0 0v7l4-3.5z" fill="#c4c4c4" /></Svg>
      </NavArrows>
      <SheetTab>Sheet1</SheetTab>
      <AddSheet>+</AddSheet>
      <HScrollDots>⋮</HScrollDots>
      <HScroll>
        <HScrollBtn><Svg w={4} h={7}><path d="M4 0v7L0 3.5z" fill="#555" /></Svg></HScrollBtn>
      </HScroll>
    </TabBar>
    <StatusBar>
      Ready
      <ViewIcons>
        <Svg w={12} h={12}><path d="M.5.5h11v11H.5zM4 .5v11M8 .5v11M.5 4h11M.5 8h11" stroke="#8a8a8a" /></Svg>
        <Svg w={12} h={13}><path d="M.5.5h11v12H.5zM3 3h6v7H3z" stroke="#8a8a8a" /></Svg>
        <Svg w={12} h={12}><path d="M.5.5h11v11H.5zM4 .5v6h4v-6" stroke="#8a8a8a" /></Svg>
        <ZoomOut width="40" height="5" fill="none">
          <path d="M0 2.500h5" stroke="#666" strokeWidth="1.500" />
          <path d="M9 2.500h31" stroke="#bbb" />
        </ZoomOut>
      </ViewIcons>
    </StatusBar>

    <Taskbar>
      <StartBtn><WindowsLogo /></StartBtn>
      <SearchBox>
        <Svg w={20} h={20}><circle cx="10" cy="10" r="8" stroke="#e8e8e8" strokeWidth="2.4" /></Svg>
        Type here to search
        <Svg w={11} h={18}>
          <rect x="3" y="1" width="5" height="10" rx="2.5" stroke="#aaa" />
          <path d="M1 8c0 6 9 6 9 0M5.500 13v3M2 17h7" stroke="#aaa" />
        </Svg>
      </SearchBox>
      <TaskItem $w={48}>
        <Svg w={20} h={16}><path d="M4.500.5h11v15h-11zM.5 3.500h2v9h-2M19.500 3.500h-2v9h2" stroke="#ddd" /></Svg>
      </TaskItem>
      <TaskItem><EdgeIcon /></TaskItem>
      <TaskItem><FolderIcon /></TaskItem>
      <TaskItem $w={46}><StoreIcon /></TaskItem>
      <TaskItem $active $open><DocIcon bg="#1f7244" letter="x" page="#2c7a50" /></TaskItem>
      <TaskItem $w={46} $open><AppIcon /></TaskItem>
      <TaskItem $w={47}><MailIcon /></TaskItem>
      <TaskItem $w={46}><FilmIcon /></TaskItem>
      <TaskItem $w={46}><DocIcon bg="#c8452b" letter="P" /></TaskItem>
      <TaskItem $w={46} $open><ChromeIcon /></TaskItem>
      <TaskItem $w={46}><DocIcon bg="#2b5ca8" letter="W" /></TaskItem>
      <Tray>
        <Svg w={12} h={7}><path d="M1 6l5-5 5 5" stroke="#eee" strokeWidth="1.3" /></Svg>
        <Svg w={14} h={10}><path d="M.5.5h12v9H.5z" stroke="#eee" /><rect x="2" y="2" width="9" height="6" fill="#eee" /></Svg>
        <Svg w={13} h={13}><path d="M1 12a11 11 0 0 1 11-11M4 12a8 8 0 0 1 8-8M7 12a5 5 0 0 1 5-5" stroke="#ccc" /></Svg>
      </Tray>
    </Taskbar>

    <FormatCells />
    <Cursor width="12" height="20">
      <path d="M1 1v15l3.500-3 2.500 6 2.500-1-2.500-6H11z" fill="#fff" stroke="#111" />
    </Cursor>
    <RecorderPanel />
  </Page>
)

export default App
